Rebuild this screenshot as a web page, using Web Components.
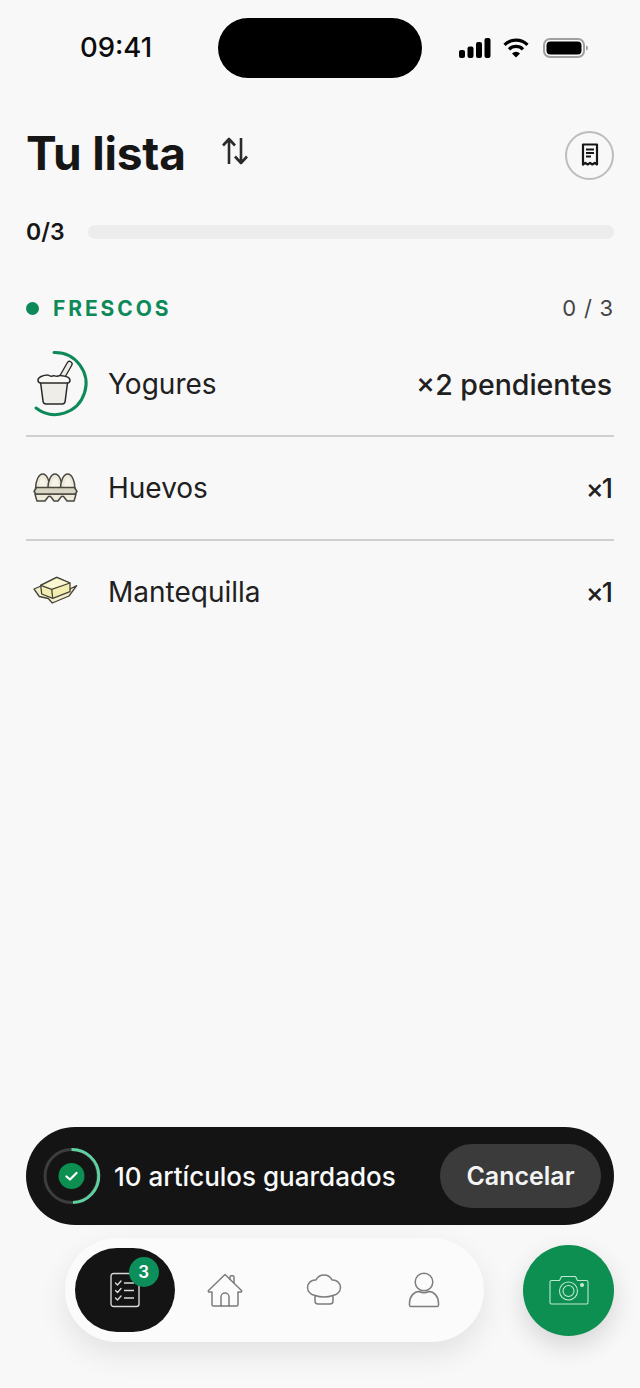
<!DOCTYPE html>
<html lang="es">
<head>
<meta charset="utf-8">
<title>Tu lista</title>
<style>
    html, body
    {
        margin      : 0;
        background  : #f8f8f8;
        font-family : "Inter", "Liberation Sans", sans-serif;
        color       : #161616;
    }
</style>
</head>
<body>
<app-page>
    <status-bar></status-bar>
    <list-header></list-header>
    <progress-row count="0/3" value="0"></progress-row>
    <section-head count="0 / 3">FRESCOS</section-head>
    <list-item qty="×2 pendientes">
        <svg slot="icon" width="64" height="64" viewBox="0 0 64 64" style="overflow:visible">
            <path d="M28 .5A31 31 0 1 1 10 56" fill="none" stroke="#0d8a58" stroke-width="3" stroke-linecap="round"/>
            <path d="M35 27L43.500 12" stroke="#2a2a2a" stroke-width="6.500" stroke-linecap="round"/>
            <path d="M35 27L43.500 12" stroke="#ecebe6" stroke-width="3.800" stroke-linecap="round"/>
            <path d="M14.500 30l2.600 19.600c.3 1.600 1.200 2.400 2.800 2.400h16.400c1.600 0 2.500-.8 2.800-2.400L41.600 30z" fill="#eeede8" stroke="#2a2a2a" stroke-width="1.500" stroke-linejoin="round"/>
            <path d="M12 28c0-2.800 5-5 10-5 2 1.400 4 1.400 6 .6 2 .9 4 .9 6-.2 5 .4 10 2 10 4.600 0 1.800-1.400 3-2.800 3H14.800C13.400 31 12 29.800 12 28z" fill="#f9f8f4" stroke="#2a2a2a" stroke-width="1.500" stroke-linejoin="round"/>
        </svg>
        Yogures
    </list-item>
    <list-item qty="×1" short>
        <svg slot="icon" width="64" height="64" viewBox="0 0 64 64" style="overflow:visible">
            <g fill="#ece8da" stroke="#4a483f" stroke-width="1.500">
                <path d="M9.500 33c0-8 3.200-15 7.200-15s7.300 7 7.300 15z"/>
                <path d="M21.800 33c0-8 3.200-15 7.200-15s7.300 7 7.300 15z"/>
                <path d="M34.400 33c0-8 3.200-15 7.300-15S49 25 49 33z"/>
            </g>
            <g fill="#f6f4ea">
                <path d="M13 32c0-5 1.600-10 3.700-10s3.800 5 3.800 10z"/>
                <path d="M25.300 32c0-5 1.600-10 3.700-10s3.800 5 3.800 10z"/>
                <path d="M38 32c0-5 1.600-10 3.700-10s3.800 5 3.800 10z"/>
            </g>
            <path d="M11 45c-1-3-1.500-5-2-7h41c-.5 2-1 4-2 7h-7l-3-4c-1-.9-2-.9-3 0l-3 4h-4l-3-4c-1-.9-2-.9-3 0l-3 4z" fill="#eeeadc" stroke="#4a483f" stroke-width="1.500" stroke-linejoin="round"/>
            <path d="M8 35.500l2.500-4h38l2.500 4-2 2.500H10z" fill="#d9d5c5" stroke="#4a483f" stroke-width="1.500" stroke-linejoin="round"/>
        </svg>
        Huevos
    </list-item>
    <list-item qty="×1" short last>
        <svg slot="icon" width="64" height="64" viewBox="0 0 64 64" style="overflow:visible">
            <path d="M8 29l7-3 11 8 18-5 6.700-3.300L43 36l-16.700 7-4-4.500-9-2z" fill="#f3efc8" stroke="#45433a" stroke-width="1.300" stroke-linejoin="round"/>
            <path d="M14.700 25.300L30.700 17.300 44 23v8.700L26.700 38.300 15.700 34z" fill="#f4edb0" stroke="#45433a" stroke-width="1.300" stroke-linejoin="round"/>
            <path d="M14.700 25.300l11 4L44 23 30.700 17.300z" fill="#faf6d2" stroke="#45433a" stroke-width="1.300" stroke-linejoin="round"/>
            <path d="M25.700 29.300l1 9" fill="none" stroke="#45433a" stroke-width="1.300"/>
        </svg>
        Mantequilla
    </list-item>
    <save-toast>10 artículos guardados</save-toast>
    <bottom-bar></bottom-bar>
</app-page>

<script>
class AppPage extends HTMLElement
{
    constructor()
    {
        super();
        this.attachShadow({mode:"open"});
    }

    connectedCallback()
    {
        this.shadowRoot.innerHTML =
        `
        <style>
            :host
            {
                display        : flex;
                flex-direction : column;
                height         : 1388px;
                overflow       : hidden;
                box-sizing     : border-box;
                padding-bottom : 46px;
            }
        </style>
        <slot></slot>`;
    }
}

class StatusBar extends HTMLElement
{
    constructor()
    {
        super();
        this.attachShadow({mode:"open"});
    }

    connectedCallback()
    {
        this.shadowRoot.innerHTML =
        `
        <style>
            :host
            {
                display               : grid;
                grid-template-columns : 218px 204px 1fr;
                align-items           : center;
                padding-top           : 18px;
                height                : 60px;
            }
            .time
            {
                font-size    : 27.500px;
                font-weight  : 500;
                text-align   : center;
                padding-left : 14px;
                margin-top   : -2px;
                color        : #0c0c0c;
            }
            .island
            {
                height        : 60px;
                background    : #000;
                border-radius : 30px;
            }
            .icons
            {
                display      : flex;
                align-items  : center;
                gap          : 12px;
                padding-left : 37px;
            }
        </style>
        <div class="time">09:41</div>
        <div class="island"></div>
        <div class="icons">
            <svg width="32" height="22" viewBox="0 0 32 22" fill="#000">
                <rect x="0" y="13" width="6" height="8" rx="2"/>
                <rect x="8.500" y="9.500" width="6" height="11.500" rx="2"/>
                <rect x="17" y="5" width="6" height="16" rx="2"/>
                <rect x="25.500" y="1" width="6" height="20" rx="2"/>
            </svg>
            <svg width="26" height="20" viewBox="0 0 26 20" fill="none" stroke="#000" stroke-width="3.200">
                <path d="M1.500 6.800a16.500 16.500 0 0 1 23 0"/>
                <path d="M6 11.300a10 10 0 0 1 14 0"/>
                <path d="M13 19.500l-4-4a5.600 5.600 0 0 1 8 0z" fill="#000" stroke="none"/>
            </svg>
            <svg width="46" height="22" viewBox="0 0 46 22" style="margin-left:2px">
                <rect x="1" y="2" width="40" height="18" rx="6" fill="none" stroke="#a0a0a0" stroke-width="2"/>
                <rect x="3.500" y="4.500" width="35" height="13" rx="4" fill="#000"/>
                <path d="M43 8.500c1.600.4 2 1.300 2 2.500s-.4 2.100-2 2.500z" fill="#a0a0a0"/>
            </svg>
        </div>`;
    }
}

class ListHeader extends HTMLElement
{
    constructor()
    {
        super();
        this.attachShadow({mode:"open"});
    }

    connectedCallback()
    {
        this.shadowRoot.innerHTML =
        `
        <style>
            :host
            {
                display     : flex;
                align-items : center;
                height      : 48px;
                margin      : 53px 26px 0;
            }
            h1
            {
                margin         : -4px 0 0;
                font-size      : 46px;
                font-weight    : 700;
                letter-spacing : -.200px;
                line-height    : 48px;
                color          : #161616;
            }
            .sort
            {
                margin : -9px 0 0 35px;
            }
            button
            {
                margin-left     : auto;
                width           : 49px;
                height          : 49px;
                padding         : 0;
                border          : 2px solid #bdbdbd;
                border-radius   : 50%;
                background      : transparent;
                display         : flex;
                align-items     : center;
                justify-content : center;
            }
        </style>
        <h1>Tu lista</h1>
        <svg class="sort" width="28" height="30" viewBox="0 0 28 30" fill="none" stroke="#2b2b2b" stroke-width="2.600" stroke-linejoin="round">
            <path d="M8 28V3M2 9.500L8 3l6 6.500"/>
            <path d="M20 2v25M14 20.500l6 6.500 6-6.500"/>
        </svg>
        <button aria-label="Recibo">
            <svg width="18" height="24" viewBox="0 0 18 24" fill="none" stroke="#161616">
                <path d="M2 1.500h14v20l-2.300-1.600-2.400 1.600L9 19.900l-2.300 1.600-2.400-1.600L2 21.500z" stroke-width="2.200" stroke-linejoin="round"/>
                <path d="M5 6.500h8M5 10h8M5 13.500h5" stroke-width="2"/>
            </svg>
        </button>`;
    }
}

class ProgressRow extends HTMLElement
{
    constructor()
    {
        super();
        this.attachShadow({mode:"open"});
    }

    connectedCallback()
    {
        this.shadowRoot.innerHTML =
        `
        <style>
            :host
            {
                display     : flex;
                align-items : center;
                height      : 30px;
                margin      : 38px 26px 0;
            }
            .count
            {
                width       : 62px;
                font-size   : 23px;
                font-weight : 600;
            }
            .track
            {
                flex          : 1;
                height        : 14px;
                background    : #ececec;
                border-radius : 7px;
                overflow      : hidden;
            }
            .fill
            {
                height     : 100%;
                width      : ${this.getAttribute("value")}%;
                background : #0d8a58;
            }
        </style>
        <span class="count">${this.getAttribute("count")}</span>
        <div class="track"><div class="fill"></div></div>`;
    }
}

class SectionHead extends HTMLElement
{
    constructor()
    {
        super();
        this.attachShadow({mode:"open"});
    }

    connectedCallback()
    {
        this.shadowRoot.innerHTML =
        `
        <style>
            :host
            {
                display     : flex;
                align-items : center;
                height      : 30px;
                margin      : 46px 26px 10px;
            }
            .dot
            {
                width         : 13px;
                height        : 13px;
                border-radius : 50%;
                background    : #0d8a58;
                margin-right  : 14px;
            }
            .name
            {
                font-size      : 21px;
                font-weight    : 700;
                letter-spacing : 2.900px;
                color          : #0d8a58;
            }
            .count
            {
                margin-left    : auto;
                font-size      : 22px;
                letter-spacing : .800px;
                color          : #444;
            }
        </style>
        <span class="dot"></span>
        <span class="name"><slot></slot></span>
        <span class="count">${this.getAttribute("count")}</span>`;
    }
}

class ListItem extends HTMLElement
{
    constructor()
    {
        super();
        this.attachShadow({mode:"open"});
    }

    connectedCallback()
    {
        this.shadowRoot.innerHTML =
        `
        <style>
            :host
            {
                display       : flex;
                align-items   : center;
                box-sizing    : border-box;
                height        : 104px;
                margin        : 0 26px;
                border-bottom : 2px solid #cfcfcf;
            }
            :host([last]) { border-bottom-color: transparent; }
            .icon
            {
                width        : 64px;
                height       : 64px;
                margin-right : 18px;
                flex         : none;
            }
            .name
            {
                flex      : 1;
                font-size : 28px;
                color     : #202020;
            }
            .qty
            {
                font-size    : 28.500px;
                font-weight  : 450;
                color        : #202020;
                margin-right : 2px;
            }
            :host([short]) .qty
            {
                font-size      : 27px;
                letter-spacing : -2px;
                margin-right   : 3px;
            }
        </style>
        <div class="icon"><slot name="icon"></slot></div>
        <div class="name"><slot></slot></div>
        <div class="qty">${this.getAttribute("qty")}</div>`;
    }
}

class SaveToast extends HTMLElement
{
    constructor()
    {
        super();
        this.attachShadow({mode:"open"});
    }

    connectedCallback()
    {
        this.shadowRoot.innerHTML =
        `
        <style>
            :host
            {
                display       : flex;
                align-items   : center;
                box-sizing    : border-box;
                height        : 98px;
                margin        : auto 26px 0;
                padding       : 0 13px 0 16px;
                background    : #141414;
                border-radius : 49px;
                color         : #fafafa;
            }
            svg { flex: none; margin-right: 13px; }
            .label
            {
                flex        : 1;
                font-size   : 26px;
                font-weight : 500;
                white-space : nowrap;
            }
            button
            {
                width         : 161px;
                height        : 64px;
                padding       : 0;
                border        : none;
                border-radius : 32px;
                background    : #3b3b3b;
                color         : #f4f4f4;
                font-family   : inherit;
                font-size     : 25px;
                font-weight   : 600;
            }
        </style>
        <svg width="59" height="62" viewBox="0 0 59 62" fill="none">
            <circle cx="29.500" cy="31" r="26.500" stroke="#3d3d3d" stroke-width="3"/>
            <path d="M29.500 4.500a26.500 26.500 0 0 1 1.500 53" stroke="#5fd0a0" stroke-width="3"/>
            <circle cx="29.500" cy="31" r="13" fill="#0c8f50"/>
            <path d="M24.500 31.500l3.500 3 6.500-6.500" stroke="#fff" stroke-width="2.200" stroke-linecap="round" stroke-linejoin="round"/>
        </svg>
        <span class="label"><slot></slot></span>
        <button>Cancelar</button>`;
    }
}

class NavItem extends HTMLElement
{
    constructor()
    {
        super();
        this.attachShadow({mode:"open"});
    }

    connectedCallback()
    {
        this.shadowRoot.innerHTML =
        `
        <style>
            :host
            {
                display         : flex;
                align-items     : center;
                justify-content : center;
                position        : relative;
                width           : 100px;
                height          : 84px;
                border-radius   : 42px;
            }
            :host([active]) { background: #141414; }
            .badge
            {
                position        : absolute;
                top             : 9px;
                right           : 16px;
                width           : 30px;
                height          : 30px;
                border-radius   : 50%;
                background      : #0c8f5a;
                color           : #fff;
                font-size       : 17px;
                font-weight     : 600;
                display         : flex;
                align-items     : center;
                justify-content : center;
            }
        </style>
        <slot></slot>
        ${this.hasAttribute("badge") ? `<span class="badge">${this.getAttribute("badge")}</span>` : ""}`;
    }
}

class BottomBar extends HTMLElement
{
    constructor()
    {
        super();
        this.attachShadow({mode:"open"});
    }

    connectedCallback()
    {
        this.shadowRoot.innerHTML =
        `
        <style>
            :host
            {
                display     : flex;
                align-items : center;
                margin      : 13px 26px 0 65px;
            }
            nav
            {
                display       : flex;
                align-items   : center;
                box-sizing    : border-box;
                width         : 419px;
                height        : 104px;
                padding       : 0 10px;
                background    : #fbfbfb;
                border-radius : 52px;
                box-shadow    : 0 12px 30px rgba(0,0,0,.09);
            }
            .fab
            {
                margin-left     : auto;
                width           : 91px;
                height          : 91px;
                border-radius   : 50%;
                background      : #0c8f50;
                box-shadow      : 0 10px 26px rgba(0,0,0,.14);
                display         : flex;
                align-items     : center;
                justify-content : center;
            }
            .fab svg { margin-top: -1px; }
        </style>
        <nav>
            <nav-item active badge="3">
                <svg width="30" height="36" viewBox="0 0 30 36" fill="none" stroke="#d8d8d8" stroke-width="1.400">
                    <rect x="1" y="1.500" width="28" height="33" rx="2.500"/>
                    <path d="M5.500 11l2 2 3.500-4M5.500 18.500l2 2 3.500-4M5.500 26l2 2 3.500-4" stroke-linecap="round" stroke-linejoin="round"/>
                    <path d="M14 11h10M14 18.500h10M14 26h10" stroke-width="1.600"/>
                </svg>
            </nav-item>
            <nav-item>
                <svg width="36" height="34" viewBox="0 0 36 34" fill="none" stroke="#7c7c7c" stroke-width="1.500" stroke-linejoin="round" stroke-linecap="round">
                    <path d="M1.500 17.500L18 1.500l16.500 16c.5.700 0 1.500-.8 1.500H31v12.500c0 .8-.7 1.500-1.500 1.500h-23C5.700 33 5 32.300 5 31.500V19H2.300c-.8 0-1.300-.8-.8-1.500z"/>
                    <path d="M23 6.500V4c0-.8.500-1.300 1.200-1.300h1.600c.7 0 1.200.5 1.200 1.300v6"/>
                    <path d="M14 33V24c0-2.200 1.800-4 4-4s4 1.800 4 4v9"/>
                </svg>
            </nav-item>
            <nav-item>
                <svg width="36" height="32" viewBox="0 0 36 32" fill="none" stroke="#7c7c7c" stroke-width="1.500" stroke-linejoin="round" stroke-linecap="round">
                    <path d="M9 21.500C5 20.500 1.500 17.500 1.500 13.500 1.500 9 5.500 5.500 10 6c1.500-3 4.500-5 8-5s6.500 2 8 5c4.500-.5 8.500 3 8.500 7.500 0 4-3.500 7-7.500 8V27c0 2-1 3-3 3H12c-2 0-3-1-3-3z"/>
                    <path d="M9 21.500c5.500 1.800 12.500 1.800 18 0"/>
                </svg>
            </nav-item>
            <nav-item>
                <svg width="32" height="36" viewBox="0 0 32 36" fill="none" stroke="#7c7c7c" stroke-width="1.500" stroke-linejoin="round">
                    <circle cx="16" cy="10" r="8.800"/>
                    <path d="M1.500 31c0-7 5-11.500 9.500-11.500 3 1.500 7 1.500 10 0 4.500 0 9.500 4.500 9.500 11.500v2c0 1-.6 1.600-1.500 1.600H3c-.9 0-1.500-.6-1.500-1.600z"/>
                </svg>
            </nav-item>
        </nav>
        <div class="fab">
            <svg width="40" height="30" viewBox="0 0 40 30" fill="none" stroke="#bfe8d3" stroke-width="1.100" stroke-linejoin="round">
                <path d="M2.500 5.500h8l2-4h14l2 4h9c.8 0 1.500.7 1.500 1.500v20.500c0 .8-.7 1.500-1.500 1.500h-35c-.8 0-1.500-.7-1.500-1.500V7c0-.8.700-1.500 1.500-1.500z"/>
                <circle cx="19.500" cy="16" r="9"/>
                <circle cx="19.500" cy="16" r="5.500"/>
                <circle cx="33" cy="10" r="1.500" fill="#bfe8d3"/>
            </svg>
        </div>`;
    }
}

customElements.define("app-page",AppPage);
customElements.define("status-bar",StatusBar);
customElements.define("list-header",ListHeader);
customElements.define("progress-row",ProgressRow);
customElements.define("section-head",SectionHead);
customElements.define("list-item",ListItem);
customElements.define("save-toast",SaveToast);
customElements.define("nav-item",NavItem);
customElements.define("bottom-bar",BottomBar);
</script>
</body>
</html>
